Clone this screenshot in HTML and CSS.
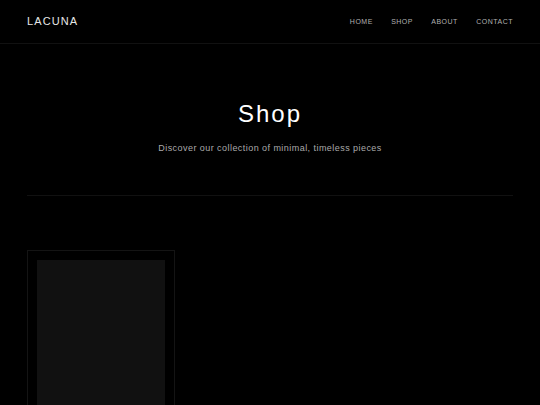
FILE: index.html
```html
<!DOCTYPE html>
<html lang="en">
<head>
<meta charset="utf-8">
<title>Lacuna — Shop</title>
<link rel="stylesheet" href="styles.css">
</head>
<body>
<header class="site-header">
  <a class="logo" href="#">LACUNA</a>
  <nav class="nav">
    <a href="#">Home</a>
    <a href="#">Shop</a>
    <a href="#">About</a>
    <a href="#">Contact</a>
  </nav>
</header>
<main class="container">
  <section class="hero">
    <h1 class="hero-title">Shop</h1>
    <p class="hero-sub">Discover our collection of minimal, timeless pieces</p>
  </section>
  <section class="products">
    <article class="card">
      <div class="card-image"></div>
    </article>
  </section>
</main>
</body>
</html>
```

FILE: styles.css
```css
* { box-sizing: border-box; }
html, body {
  margin: 0;
  padding: 0;
  background: #000;
  color: #fff;
  font-family: "Liberation Sans", Arial, Helvetica, sans-serif;
  overflow: hidden;
}
a { color: inherit; text-decoration: none; }

.site-header {
  height: 44px;
  display: flex;
  align-items: center;
  justify-content: space-between;
  padding: 0 27px;
  border-bottom: 1px solid #111;
}
.logo {
  font-size: 11px;
  letter-spacing: 1.1px;
  color: #e6e6e6;
  margin-top: -1px;
}
.nav {
  display: flex;
  gap: 18.3px;
  margin-top: 0;
}
.nav a {
  font-size: 7px;
  letter-spacing: 0.5px;
  text-transform: uppercase;
  color: #b0b0b0;
}

.container {
  padding: 0 27px;
}
.hero {
  text-align: center;
  padding: 56px 0 41px;
  border-bottom: 1px solid #111;
}
.hero-title {
  margin: 0;
  font-size: 24px;
  font-weight: 400;
  letter-spacing: 2px;
  line-height: 28px;
  color: #fff;
}
.hero-sub {
  margin: 14px 0 0;
  font-size: 9px;
  letter-spacing: 0.45px;
  line-height: 12px;
  color: #aaa;
}

.products {
  padding-top: 54px;
  display: grid;
  grid-template-columns: repeat(3, 148px);
  gap: 20px;
}
.card {
  border: 1px solid #141414;
  padding: 9px;
  height: 200px;
}
.card-image {
  background: #111;
  height: 100%;
}
```
